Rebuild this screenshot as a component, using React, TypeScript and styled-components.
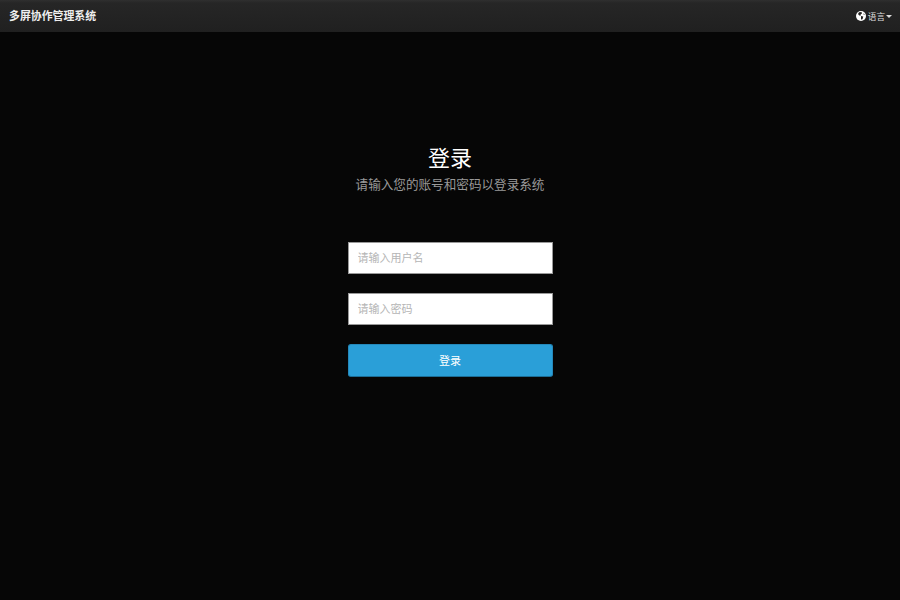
import React from 'react';
import styled, { createGlobalStyle } from 'styled-components';

const GlobalStyle = createGlobalStyle`
  html, body {
    margin: 0;
    padding: 0;
    background: #060606;
    font-family: "Liberation Sans", Arial, "Noto Sans CJK SC", sans-serif;
  }
  * { box-sizing: border-box; }
`;

const Page = styled.div`
  height: 600px;
  overflow: hidden;
  background: #060606;
`;

const Navbar = styled.div`
  height: 32px;
  display: flex;
  align-items: center;
  justify-content: space-between;
  padding: 0 8px 0 9px;
  background: linear-gradient(to bottom, #2f2f2f 0, #262626 3px, #202020 100%);
`;

const Brand = styled.div`
  color: #eeeeee;
  font-size: 10.9px;
  font-weight: 700;
  line-height: 31px;
`;

const LangMenu = styled.div`
  display: flex;
  align-items: center;
  color: #dddddd;
  font-size: 8.6px;
`;

const GlobeIcon = styled.svg`
  width: 10px;
  height: 10px;
  margin-right: 2px;
`;

const Caret = styled.span`
  width: 0;
  height: 0;
  margin-left: 1px;
  border-top: 3px solid #dddddd;
  border-left: 3px solid transparent;
  border-right: 3px solid transparent;
`;

const Main = styled.div`
  width: 205px;
  margin: 0 auto;
  padding-top: 112px;
`;

const Title = styled.h1`
  margin: 0 -60px;
  color: #ffffff;
  font-size: 22px;
  font-weight: 400;
  line-height: 30px;
  text-align: center;
`;

const Subtitle = styled.p`
  margin: 0 -60px 46px;
  color: #999999;
  font-size: 12.6px;
  line-height: 22px;
  text-align: center;
`;

const Field = styled.input`
  display: block;
  width: 100%;
  height: 32px;
  margin-bottom: 19px;
  padding: 0 9px;
  border: 1px solid #999999;
  border-radius: 0;
  background: #ffffff;
  font-family: inherit;
  font-size: 11px;
  outline: none;
  &::placeholder { color: #b5b5b5; opacity: 1; }
`;

const SubmitButton = styled.button`
  display: block;
  width: 100%;
  height: 33px;
  padding: 0 0 2px;
  border: 1px solid #2488ba;
  border-bottom-color: #1b6d96;
  border-radius: 3px;
  background: #2a9fd8;
  color: #ffffff;
  font-family: inherit;
  font-size: 11px;
`;

export default function App() {
  return (
    <Page>
      <GlobalStyle />
      <Navbar>
        <Brand>多屏协作管理系统</Brand>
        <LangMenu>
          <GlobeIcon viewBox="0 0 20 20">
            <circle cx="10" cy="10" r="10" fill="#ffffff" />
            <path d="M6 2.5 L11 2 L12 5 L9 7 L10 9 L6.5 9 L4 6 Z" fill="#222222" />
            <path d="M10 10 L14.5 11 L13.5 15 L11.5 18 L10 15 Z" fill="#222222" />
            <path d="M15 4.5 L17.5 7 L15.5 8 Z" fill="#222222" />
          </GlobeIcon>
          语言
          <Caret />
        </LangMenu>
      </Navbar>
      <Main>
        <Title>登录</Title>
        <Subtitle>请输入您的账号和密码以登录系统</Subtitle>
        <Field type="text" placeholder="请输入用户名" />
        <Field type="password" placeholder="请输入密码" />
        <SubmitButton>登录</SubmitButton>
      </Main>
    </Page>
  );
}
